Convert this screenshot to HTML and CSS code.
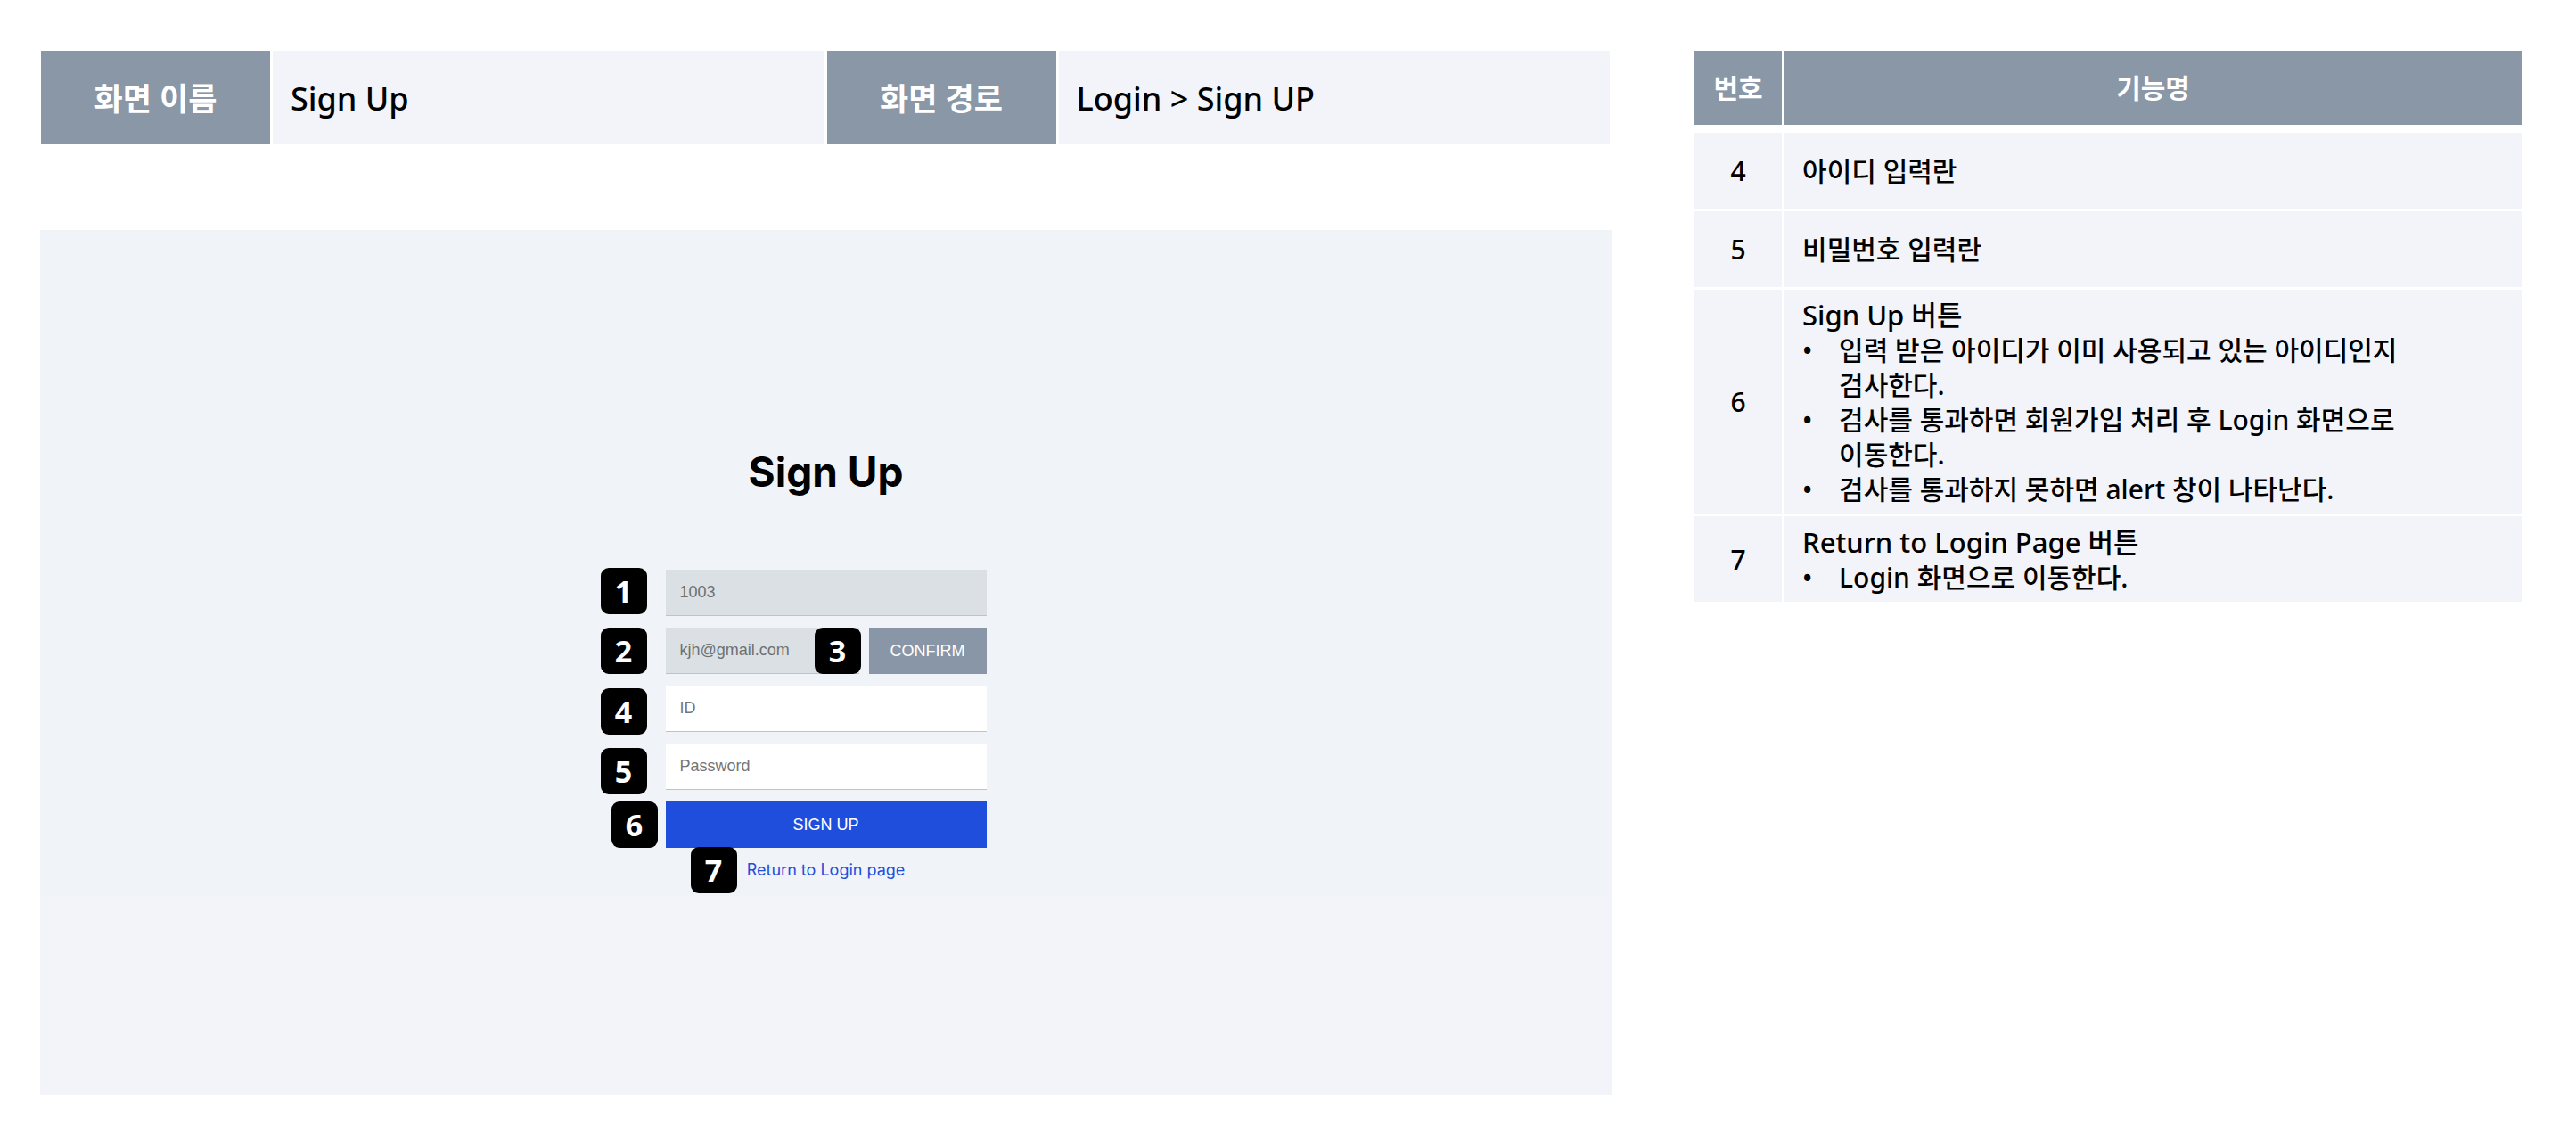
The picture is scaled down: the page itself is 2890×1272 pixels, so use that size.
FILE: index.html
```html
<!DOCTYPE html>
<html lang="ko">
<head>
<meta charset="utf-8">
<meta name="viewport" content="width=device-width, initial-scale=1">
<title>Sign Up</title>
<link rel="stylesheet" href="styles.css">
</head>
<body>
<div class="sheet">
  <main class="screen">
    <dl class="meta">
      <dt class="meta-label">화면 이름</dt>
      <dd class="meta-value">Sign Up</dd>
      <dt class="meta-label">화면 경로</dt>
      <dd class="meta-value">Login &gt; Sign UP</dd>
    </dl>
    <section class="panel">
      <h1 class="title">Sign Up</h1>
      <form class="form">
        <div class="row">
          <span class="badge badge-1">1</span>
          <input class="field" type="text" value="1003" aria-label="Number" readonly>
        </div>
        <div class="row">
          <span class="badge badge-2">2</span>
          <input class="field" type="email" value="kjh@gmail.com" aria-label="Email" readonly>
          <span class="badge badge-3">3</span>
          <button class="button button-confirm" type="button">CONFIRM</button>
        </div>
        <div class="row">
          <span class="badge badge-4">4</span>
          <input class="field" type="text" placeholder="ID" aria-label="ID">
        </div>
        <div class="row">
          <span class="badge badge-5">5</span>
          <input class="field" type="password" placeholder="Password" aria-label="Password">
        </div>
        <div class="row">
          <span class="badge badge-6">6</span>
          <button class="button button-submit" type="submit">SIGN UP</button>
        </div>
        <div class="row row-link">
          <span class="badge badge-7">7</span>
          <a class="link" href="#login">Return to Login page</a>
        </div>
      </form>
    </section>
  </main>
  <aside class="notes">
    <table class="spec">
      <thead>
        <tr><th class="num" scope="col">번호</th><th scope="col">기능명</th></tr>
      </thead>
      <tbody>
        <tr class="short"><td class="num">4</td><td>아이디 입력란</td></tr>
        <tr class="short"><td class="num">5</td><td>비밀번호 입력란</td></tr>
        <tr>
          <td class="num">6</td>
          <td>
            <p class="name">Sign Up 버튼</p>
            <ul class="points">
              <li>입력 받은 아이디가 이미 사용되고 있는 아이디인지 검사한다.</li>
              <li>검사를 통과하면 회원가입 처리 후 Login 화면으로 이동한다.</li>
              <li>검사를 통과하지 못하면 alert 창이 나타난다.</li>
            </ul>
          </td>
        </tr>
        <tr>
          <td class="num">7</td>
          <td>
            <p class="name">Return to Login Page 버튼</p>
            <ul class="points">
              <li>Login 화면으로 이동한다.</li>
            </ul>
          </td>
        </tr>
      </tbody>
    </table>
  </aside>
</div>
</body>
</html>
```
FILE: styles.css
```css
* {
  box-sizing: border-box;
}

body {
  margin: 0;
  background: #fff;
  color: #000;
  font-family: "Noto Sans", "Noto Sans CJK KR", sans-serif;
  font-weight: 500;
}

.sheet {
  display: grid;
  grid-template-columns: 19fr 10fr;
  gap: 93px;
  align-items: start;
  padding: 57px 61px 45px 45px;
}

/* Screen name and path */
.meta {
  display: grid;
  grid-template-columns: 257px 1fr 257px 1fr;
  gap: 3px;
  margin: 0 2px 97px 1px;
  font-size: 36px;
  line-height: 48px;
}

.meta-label,
.meta-value {
  margin: 0;
  padding: 30px 20px 26px;
}

.meta-label {
  background: #8a97a7;
  color: #fff;
  font-size: 35px;
  font-weight: 700;
  text-align: center;
}

.meta-value {
  background: #f3f4f9;
}

/* Sign-up screen */
.panel {
  display: flex;
  flex-direction: column;
  align-items: center;
  padding: 243px 24px 240px;
  background: linear-gradient(#f0f4f9 77%, #f3f4f9 0);
}

.title {
  margin: 0 0 82px;
  font: 700 46px/56px Inter, sans-serif;
}

.form {
  display: flex;
  flex-direction: column;
  gap: 13px;
  width: 360px;
}

.row {
  position: relative;
  display: flex;
  gap: 11px;
}

.row-link {
  justify-content: center;
}

.field,
.button {
  height: 52px;
  border: 0;
  border-radius: 0;
  font: 400 18px "Liberation Sans", Arial, sans-serif;
}

.field {
  flex: 1;
  min-width: 0;
  padding: 0 16px;
  border-bottom: 1px solid #bfc3c9;
  background: #fff;
}

.field:read-only {
  background: #dbe0e4;
  color: #6d7174;
}

.field::placeholder {
  color: #757575;
  opacity: 1;
}

.button {
  color: #fff;
}

.button-confirm {
  width: 132px;
  background: #8896a8;
}

.button-submit {
  flex: 1;
  background: #1f4edd;
}

.link {
  color: #1f4edd;
  font: 400 18px/24px Inter, sans-serif;
  text-decoration: none;
}

/* Numbered markers over the form */
.badge {
  position: absolute;
  top: 0;
  left: -73px;
  width: 52px;
  border-radius: 9px;
  background: #000;
  color: #fff;
  font-size: 34px;
  font-weight: 700;
  line-height: 52px;
  text-align: center;
}

.badge-1 { top: -2px; }
.badge-3 { left: 167px; }
.badge-4 { top: 3px; }
.badge-5 { top: 5px; }
.badge-6 { left: -61px; }
.badge-7 { top: -14px; left: 28px; }

/* Function table */
.spec {
  width: 100%;
  border-spacing: 0;
  font-size: 30px;
  line-height: 39px;
  word-break: keep-all;
}

.spec th,
.spec td {
  height: 99px;
  padding: 8px 20px;
  border-bottom: 3px solid #fff;
  background: #f3f4f9;
  background-clip: padding-box;
  text-align: left;
  vertical-align: middle;
}

.spec th {
  height: 92px;
  border-bottom-width: 9px;
  background-color: #8a97a7;
  color: #fff;
  font-weight: 700;
  text-align: center;
}

.spec .short td {
  height: 88px;
}

.spec .num {
  width: 101px;
  padding: 8px 0;
  border-right: 3px solid #fff;
  text-align: center;
}

.name {
  margin: 0;
  padding-top: 1px;
  font-size: 31px;
}

.points {
  margin: 0;
  padding: 0;
  list-style: none;
}

.points li {
  padding-left: 41px;
}

.points li::before {
  content: "•";
  display: inline-block;
  width: 41px;
  margin-left: -41px;
}
```
